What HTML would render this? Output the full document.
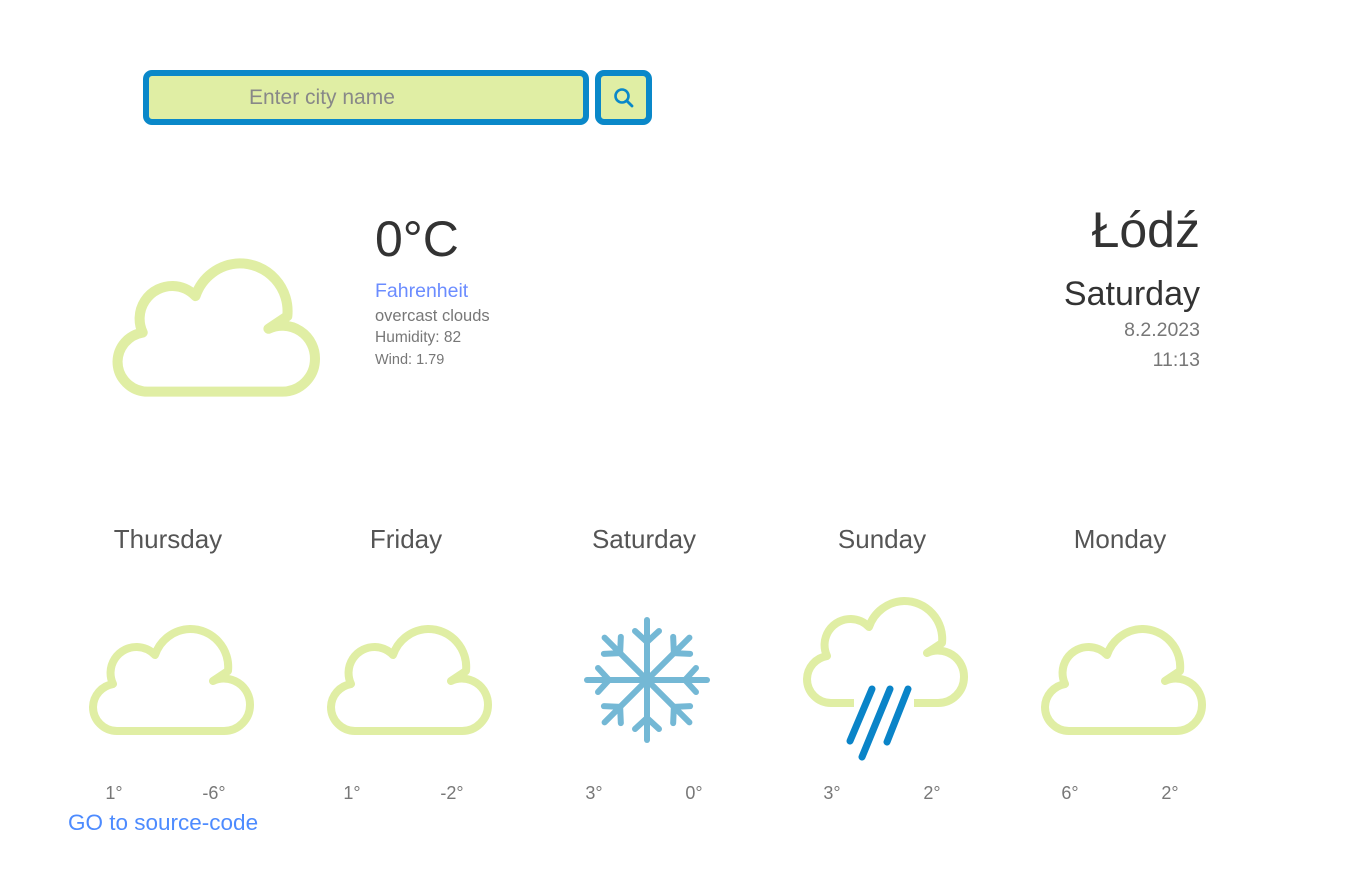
<!DOCTYPE html>
<html><head><meta charset="utf-8"><style>
*{margin:0;padding:0;box-sizing:border-box}
body{width:1371px;height:878px;background:#fff;position:relative;overflow:hidden;font-family:"Liberation Sans",sans-serif;color:#333}
.a{position:absolute;white-space:nowrap;line-height:1}
.box{position:absolute;border:6px solid #0a88c9;border-radius:9px;background:#e0eea4}
svg{position:absolute;overflow:visible}
.c{fill:none;stroke:#e0eea4;stroke-width:8;stroke-linejoin:round;stroke-linecap:round}
.day{font-size:26px;color:#555;transform:translateX(-50%)}
.t{font-size:18px;color:#777;transform:translateX(-50%)}
</style></head><body>
<svg width="0" height="0"><defs>
<path id="cl" d="M30 106 H137 A26 26 0 0 0 163 80 A26 26 0 0 0 126 56 L141 46 A38 38 0 0 0 103 4 A38 38 0 0 0 68 30 A26 26 0 0 0 50 22 A26 26 0 0 0 26 59 A24 24 0 0 0 6 82 A24 24 0 0 0 30 106 Z"/>
<g id="arm"><line x1="0" y1="0" x2="0" y2="-60"/><line x1="0" y1="-38" x2="-12" y2="-49"/><line x1="0" y1="-38" x2="12" y2="-49"/></g>
</defs></svg>

<div class="box" style="left:143px;top:70px;width:446px;height:55px"></div>
<div class="a" style="left:249px;top:87px;font-size:21px;color:#888">Enter city name</div>
<div class="box" style="left:595px;top:70px;width:57px;height:55px"></div>
<svg style="left:612px;top:86px" width="24" height="24" viewBox="0 0 24 24"><circle cx="10" cy="10" r="6.5" fill="none" stroke="#0a88c9" stroke-width="2.6"/><line x1="15" y1="15" x2="20" y2="20" stroke="#0a88c9" stroke-width="2.8" stroke-linecap="round"/></svg>

<svg style="left:110px;top:258px" width="210" height="139" viewBox="0 0 167 110"><use href="#cl" class="c"/></svg>

<div class="a" style="left:375px;top:214px;font-size:50px;color:#333">0°C</div>
<div class="a" style="left:375px;top:282px;font-size:19.5px;color:#6b8cff">Fahrenheit</div>
<div class="a" style="left:375px;top:308px;font-size:16.5px;color:#777">overcast clouds</div>
<div class="a" style="left:375px;top:330px;font-size:15.5px;color:#777">Humidity: 82</div>
<div class="a" style="left:375px;top:353px;font-size:14.5px;color:#777">Wind: 1.79</div>

<div class="a" style="right:171px;top:205px;font-size:50px;color:#333">Łódź</div>
<div class="a" style="right:171px;top:277px;font-size:34px;color:#333">Saturday</div>
<div class="a" style="right:171px;top:321px;font-size:19.5px;color:#777">8.2.2023</div>
<div class="a" style="right:171px;top:351px;font-size:19.5px;color:#777">11:13</div>

<div class="a day" style="left:168px;top:526px">Thursday</div>
<div class="a day" style="left:406px;top:526px">Friday</div>
<div class="a day" style="left:644px;top:526px">Saturday</div>
<div class="a day" style="left:882px;top:526px">Sunday</div>
<div class="a day" style="left:1120px;top:526px">Monday</div>

<svg style="left:87px;top:625px" width="167" height="110" viewBox="0 0 167 110"><use href="#cl" class="c"/></svg>
<svg style="left:325px;top:625px" width="167" height="110" viewBox="0 0 167 110"><use href="#cl" class="c"/></svg>
<svg style="left:1039px;top:625px" width="167" height="110" viewBox="0 0 167 110"><use href="#cl" class="c"/></svg>

<svg style="left:647px;top:680px" width="1" height="1"><g stroke="#74b8d5" stroke-width="6" stroke-linecap="round">
<use href="#arm"/><use href="#arm" transform="rotate(45)"/><use href="#arm" transform="rotate(90)"/><use href="#arm" transform="rotate(135)"/><use href="#arm" transform="rotate(180)"/><use href="#arm" transform="rotate(225)"/><use href="#arm" transform="rotate(270)"/><use href="#arm" transform="rotate(315)"/></g></svg>

<svg style="left:801px;top:597px" width="167" height="170" viewBox="0 0 167 170">
<use href="#cl" class="c"/>
<rect x="53" y="98" width="60" height="14" fill="#fff"/>
<g stroke="#0a84c8" stroke-width="7" stroke-linecap="round">
<line x1="71" y1="92" x2="49" y2="144"/><line x1="89" y1="92" x2="61" y2="160"/><line x1="107" y1="92" x2="86" y2="145"/></g>
</svg>

<div class="a t" style="left:114px;top:784px">1°</div><div class="a t" style="left:214px;top:784px">-6°</div>
<div class="a t" style="left:352px;top:784px">1°</div><div class="a t" style="left:452px;top:784px">-2°</div>
<div class="a t" style="left:594px;top:784px">3°</div><div class="a t" style="left:694px;top:784px">0°</div>
<div class="a t" style="left:832px;top:784px">3°</div><div class="a t" style="left:932px;top:784px">2°</div>
<div class="a t" style="left:1070px;top:784px">6°</div><div class="a t" style="left:1170px;top:784px">2°</div>

<div class="a" style="left:68px;top:812px;font-size:22.5px;color:#4d8bff">GO to source-code</div>
</body></html>
